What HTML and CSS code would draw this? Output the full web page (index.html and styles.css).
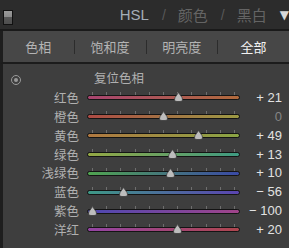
FILE: index.html
```html
<!DOCTYPE html>
<html lang="zh-CN">
<head>
    <meta charset="UTF-8">
    <meta name="viewport" content="width=device-width, initial-scale=1.0">
    <title>HSL</title>
    <link rel="stylesheet" href="styles.css">
</head>
<body>
    <div class="panel">
        <div class="panel-header">
            <span class="toggle"></span>
            <div class="modes">
                <span class="mode active">HSL</span>
                <span class="slash">/</span>
                <span class="mode">颜色</span>
                <span class="slash">/</span>
                <span class="mode">黑白</span>
                <span class="arrow">▼</span>
            </div>
        </div>

        <div class="tabs">
            <span class="tab">色相</span>
            <span class="sep"></span>
            <span class="tab">饱和度</span>
            <span class="sep"></span>
            <span class="tab">明亮度</span>
            <span class="sep"></span>
            <span class="tab active">全部</span>
        </div>

        <div class="sliders">
            <div class="reset-row">
                <span class="target"></span>
                <span class="reset">复位色相</span>
            </div>

            <div class="row">
                <span class="label">红色</span>
                <div class="slider">
                    <div class="ticks"><i></i><i></i><i></i><i></i><i></i><i></i><i></i><i></i><i></i><i></i><i></i></div>
                    <div class="track red"></div>
                    <div class="range"><svg class="thumb" style="left: 60.5%" width="11" height="10" viewBox="0 0 11 10"><path d="M5.5 0.5 L9 5.5 Q10.5 9.5 7 9.5 L4 9.5 Q0.5 9.5 2 5.5 Z"/></svg></div>
                </div>
                <span class="value">+ 21</span>
            </div>
            <div class="row">
                <span class="label">橙色</span>
                <div class="slider">
                    <div class="ticks"><i></i><i></i><i></i><i></i><i></i><i></i><i></i><i></i><i></i><i></i><i></i></div>
                    <div class="track orange"></div>
                    <div class="range"><svg class="thumb" style="left: 50%" width="11" height="10" viewBox="0 0 11 10"><path d="M5.5 0.5 L9 5.5 Q10.5 9.5 7 9.5 L4 9.5 Q0.5 9.5 2 5.5 Z"/></svg></div>
                </div>
                <span class="value zero">0</span>
            </div>
            <div class="row">
                <span class="label">黄色</span>
                <div class="slider">
                    <div class="ticks"><i></i><i></i><i></i><i></i><i></i><i></i><i></i><i></i><i></i><i></i><i></i></div>
                    <div class="track yellow"></div>
                    <div class="range"><svg class="thumb" style="left: 74.5%" width="11" height="10" viewBox="0 0 11 10"><path d="M5.5 0.5 L9 5.5 Q10.5 9.5 7 9.5 L4 9.5 Q0.5 9.5 2 5.5 Z"/></svg></div>
                </div>
                <span class="value">+ 49</span>
            </div>
            <div class="row">
                <span class="label">绿色</span>
                <div class="slider">
                    <div class="ticks"><i></i><i></i><i></i><i></i><i></i><i></i><i></i><i></i><i></i><i></i><i></i></div>
                    <div class="track green"></div>
                    <div class="range"><svg class="thumb" style="left: 56.5%" width="11" height="10" viewBox="0 0 11 10"><path d="M5.5 0.5 L9 5.5 Q10.5 9.5 7 9.5 L4 9.5 Q0.5 9.5 2 5.5 Z"/></svg></div>
                </div>
                <span class="value">+ 13</span>
            </div>
            <div class="row">
                <span class="label">浅绿色</span>
                <div class="slider">
                    <div class="ticks"><i></i><i></i><i></i><i></i><i></i><i></i><i></i><i></i><i></i><i></i><i></i></div>
                    <div class="track aqua"></div>
                    <div class="range"><svg class="thumb" style="left: 55%" width="11" height="10" viewBox="0 0 11 10"><path d="M5.5 0.5 L9 5.5 Q10.5 9.5 7 9.5 L4 9.5 Q0.5 9.5 2 5.5 Z"/></svg></div>
                </div>
                <span class="value">+ 10</span>
            </div>
            <div class="row">
                <span class="label">蓝色</span>
                <div class="slider">
                    <div class="ticks"><i></i><i></i><i></i><i></i><i></i><i></i><i></i><i></i><i></i><i></i><i></i></div>
                    <div class="track blue"></div>
                    <div class="range"><svg class="thumb" style="left: 22%" width="11" height="10" viewBox="0 0 11 10"><path d="M5.5 0.5 L9 5.5 Q10.5 9.5 7 9.5 L4 9.5 Q0.5 9.5 2 5.5 Z"/></svg></div>
                </div>
                <span class="value">− 56</span>
            </div>
            <div class="row">
                <span class="label">紫色</span>
                <div class="slider">
                    <div class="ticks"><i></i><i></i><i></i><i></i><i></i><i></i><i></i><i></i><i></i><i></i><i></i></div>
                    <div class="track purple"></div>
                    <div class="range"><svg class="thumb" style="left: 0%" width="11" height="10" viewBox="0 0 11 10"><path d="M5.5 0.5 L9 5.5 Q10.5 9.5 7 9.5 L4 9.5 Q0.5 9.5 2 5.5 Z"/></svg></div>
                </div>
                <span class="value">− 100</span>
            </div>
            <div class="row">
                <span class="label">洋红</span>
                <div class="slider">
                    <div class="ticks"><i></i><i></i><i></i><i></i><i></i><i></i><i></i><i></i><i></i><i></i><i></i></div>
                    <div class="track magenta"></div>
                    <div class="range"><svg class="thumb" style="left: 60%" width="11" height="10" viewBox="0 0 11 10"><path d="M5.5 0.5 L9 5.5 Q10.5 9.5 7 9.5 L4 9.5 Q0.5 9.5 2 5.5 Z"/></svg></div>
                </div>
                <span class="value">+ 20</span>
            </div>
        </div>
    </div>
</body>
</html>
```

FILE: styles.css
```css
/* General Styles */
body {
    margin: 0;
    padding: 0;
    background-color: #3e3e3e;
    font-family: "Noto Sans CJK SC", "Liberation Sans", sans-serif;
    overflow: hidden;
}
.panel {
    width: 289px;
    height: 248px;
    background-color: #3e3e3e;
    overflow: hidden;
}

/* Header */
.panel-header {
    height: 29px;
    background-color: #2c2c2c;
    border-bottom: 2px solid #1a1a1a;
    display: flex;
    align-items: center;
}
.toggle {
    width: 8px;
    height: 13px;
    margin-left: 3px;
    margin-top: 5px;
    border: 1px solid #111;
    background: linear-gradient(#9a9a9a 0, #8a8a8a 50%, #575757 50%, #4e4e4e 100%);
}
.modes {
    margin-left: auto;
    display: flex;
    align-items: center;
    font-size: 15px;
    color: #646464;
    white-space: nowrap;
}
.mode.active {
    font-family: "Liberation Sans", sans-serif;
    font-size: 15px;
    color: #a5aeb8;
    margin-right: 13px;
}
.slash {
    font-family: "Liberation Sans", sans-serif;
    color: #585858;
    font-size: 14px;
}
.slash + .mode {
    margin-left: 12px;
    margin-right: 13px;
}
.arrow {
    font-family: "DejaVu Sans", sans-serif;
    font-size: 12px;
    color: #d8d8d8;
    margin-left: 0;
}

/* Tabs */
.tabs {
    height: 31px;
    background-color: #474747;
    border-bottom: 2px solid #1c1c1c;
    border-left: 3px solid #1e1e1e;
    display: flex;
    align-items: center;
    font-size: 13px;
    color: #b4b4b4;
}
.tab {
    flex: 1;
    text-align: center;
}
.tab.active {
    color: #f2f2f2;
}
.sep {
    width: 1px;
    height: 14px;
    background-color: #2c2c2c;
}

/* Sliders */
.sliders {
    height: 186px;
    border-left: 3px solid #1e1e1e;
    padding-top: 5px;
    box-sizing: border-box;
}
.reset-row {
    height: 19px;
    display: flex;
    align-items: center;
}
.target {
    width: 8px;
    height: 8px;
    border: 1px solid #9a9a9a;
    border-radius: 50%;
    margin-left: 8px;
    position: relative;
    top: 1px;
}
.target::after {
    content: "";
    position: absolute;
    left: 2px;
    top: 2px;
    width: 4px;
    height: 4px;
    border-radius: 50%;
    background-color: #9a9a9a;
}
.reset {
    margin-left: 73px;
    font-size: 12.5px;
    color: #b0b0b0;
    position: relative;
    top: -1px;
}
.row {
    height: 18.86px;
    display: flex;
    align-items: center;
}
.label {
    width: 76px;
    text-align: right;
    font-size: 12.5px;
    color: #b0b0b0;
}
.slider {
    width: 153px;
    height: 18px;
    margin-left: 8px;
    position: relative;
}
.ticks {
    position: absolute;
    left: 5px;
    right: 5px;
    top: 4px;
    height: 3px;
    display: flex;
    justify-content: space-between;
}
.ticks i {
    width: 1px;
    height: 3px;
    background-color: #6e6e6e;
}
.track {
    position: absolute;
    left: 0;
    right: 0;
    top: 7px;
    height: 3px;
    border: 1px solid #141414;
    border-radius: 3px;
}
.red { background: linear-gradient(to right, #a8446f, #b06a3c); }
.orange { background: linear-gradient(to right, #ad4a44, #9c9a44); }
.yellow { background: linear-gradient(to right, #b07840, #8aa444); }
.green { background: linear-gradient(to right, #94a844, #3e9a82); }
.aqua { background: linear-gradient(to right, #50a450, #3a4aa6); }
.blue { background: linear-gradient(to right, #3e9886, #5a44b0); }
.purple { background: linear-gradient(to right, #4c48b2, #a0448a); }
.magenta { background: linear-gradient(to right, #9444a4, #ae464e); }
.range {
    position: absolute;
    left: 5px;
    right: 5px;
    top: 4px;
    height: 10px;
}
.thumb {
    position: absolute;
    top: 0;
    margin-left: -5.5px;
    fill: #bdbdbd;
    stroke: #3a3a3a;
    stroke-width: 0.8;
}
.value {
    width: 42px;
    text-align: right;
    font-family: "Liberation Sans", sans-serif;
    font-size: 13px;
    color: #e2e2e2;
}
.value.zero {
    color: #858585;
}
```
